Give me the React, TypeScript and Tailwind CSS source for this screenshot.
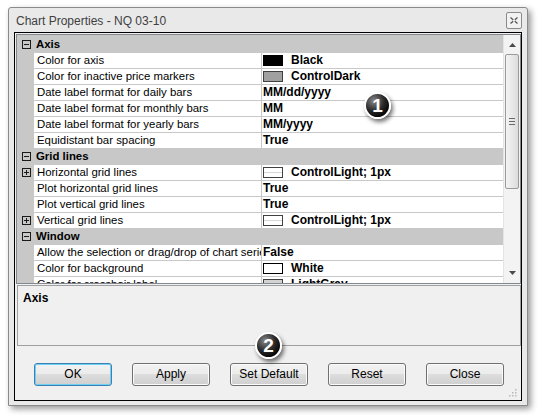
import React from 'react'

type Swatch = 'black' | 'dark' | 'light' | 'white' | 'lightgray'

type Row =
  | { kind: 'cat'; label: string }
  | { kind: 'prop'; label: string; value: string; swatch?: Swatch; expand?: boolean }

const rows: Row[] = [
  { kind: 'cat', label: 'Axis' },
  { kind: 'prop', label: 'Color for axis', value: 'Black', swatch: 'black' },
  { kind: 'prop', label: 'Color for inactive price markers', value: 'ControlDark', swatch: 'dark' },
  { kind: 'prop', label: 'Date label format for daily bars', value: 'MM/dd/yyyy' },
  { kind: 'prop', label: 'Date label format for monthly bars', value: 'MM' },
  { kind: 'prop', label: 'Date label format for yearly bars', value: 'MM/yyyy' },
  { kind: 'prop', label: 'Equidistant bar spacing', value: 'True' },
  { kind: 'cat', label: 'Grid lines' },
  { kind: 'prop', label: 'Horizontal grid lines', value: 'ControlLight; 1px', swatch: 'light', expand: true },
  { kind: 'prop', label: 'Plot horizontal grid lines', value: 'True' },
  { kind: 'prop', label: 'Plot vertical grid lines', value: 'True' },
  { kind: 'prop', label: 'Vertical grid lines', value: 'ControlLight; 1px', swatch: 'light', expand: true },
  { kind: 'cat', label: 'Window' },
  { kind: 'prop', label: 'Allow the selection or drag/drop of chart series', value: 'False' },
  { kind: 'prop', label: 'Color for background', value: 'White', swatch: 'white' },
  { kind: 'prop', label: 'Color for crosshair label', value: 'LightGray', swatch: 'lightgray' },
]

const swatchClass: Record<Swatch, string> = {
  black: 'bg-black border-black',
  dark: 'bg-[#a0a0a0] border-[#404040]',
  light: 'bg-white border-[#404040]',
  white: 'bg-white border-black',
  lightgray: 'bg-[#d3d3d3] border-[#404040]',
}

function Expander({ open }: { open: boolean }) {
  return (
    <svg width="9" height="9" viewBox="0 0 9 9" className="shrink-0">
      <rect x="0.5" y="0.5" width="8" height="8" fill="none" stroke="#1a1a1a" />
      <line x1="2" y1="4.5" x2="7" y2="4.5" stroke="#1a1a1a" />
      {!open && <line x1="4.5" y1="2" x2="4.5" y2="7" stroke="#1a1a1a" />}
    </svg>
  )
}

function Badge({ n }: { n: string }) {
  return (
    <div className="w-[27px] h-[27px] rounded-full border-2 border-white bg-[radial-gradient(circle_at_35%_30%,#8a8a8a_0%,#2a2a2a_45%,#000_80%)] shadow-[2px_3px_4px_rgba(0,0,0,0.55)] flex items-center justify-center text-white font-bold text-[19px] leading-none font-['Liberation_Sans',sans-serif]">
      {n}
    </div>
  )
}

function GridRow({ row }: { row: Row }) {
  if (row.kind === 'cat') {
    return (
      <div className="h-[15px] flex items-center shrink-0">
        <div className="w-[16px] flex justify-center pl-[2px]">
          <Expander open />
        </div>
        <span className="pl-[3px] font-bold text-[11.4px]">{row.label}</span>
      </div>
    )
  }
  return (
    <div className="h-[15px] flex gap-x-[1px] shrink-0">
      <div className="w-[16px] flex items-center justify-center pl-[2px]">
        {row.expand && <Expander open={false} />}
      </div>
      <div className="w-[227px] bg-white pl-[3px] text-[11.4px] whitespace-nowrap overflow-hidden">{row.label}</div>
      <div className="flex-1 bg-white pl-[1px] flex items-center gap-[8px] font-bold whitespace-nowrap overflow-hidden">
        {row.swatch && (
          <span className={`relative w-[20px] h-[11px] border shrink-0 ${swatchClass[row.swatch]}`}>
            {row.swatch === 'light' && (
              <span className="absolute left-0 right-0 top-[4px] h-[1px] bg-[#d8d8d8]" />
            )}
          </span>
        )}
        <span>{row.value}</span>
      </div>
    </div>
  )
}

function Scrollbar() {
  return (
    <div className="w-[17px] bg-[#f3f3f3] border-l border-[#e4e4e4] flex flex-col items-center">
      <div className="h-[17px] flex items-center justify-center pt-[3px]">
        <svg width="7" height="4" viewBox="0 0 7 4">
          <path d="M3.5 0 L7 4 L0 4 Z" fill="#4a4a4a" />
        </svg>
      </div>
      <div className="mt-[2px] w-[14px] h-[135px] rounded-[2px] border border-[#9a9a9a] bg-[linear-gradient(90deg,#f4f4f4,#dcdcdc)] flex flex-col items-center justify-center gap-[2px]">
        <span className="w-[6px] h-[1px] bg-[#6a6a6a]" />
        <span className="w-[6px] h-[1px] bg-[#6a6a6a]" />
        <span className="w-[6px] h-[1px] bg-[#6a6a6a]" />
      </div>
      <div className="flex-1" />
      <div className="h-[17px] flex items-center justify-center pb-[4px]">
        <svg width="7" height="4" viewBox="0 0 7 4">
          <path d="M0 0 L7 0 L3.5 4 Z" fill="#4a4a4a" />
        </svg>
      </div>
    </div>
  )
}

function Button({ label, focused }: { label: string; focused?: boolean }) {
  return (
    <button
      className={`w-[78px] h-[23px] rounded-[3px] border text-[12px] text-black bg-[linear-gradient(#f2f2f2_0%,#ebebeb_50%,#dddddd_50%,#cfcfcf_100%)] ${
        focused
          ? 'border-[#3c7fb1] shadow-[inset_0_0_0_1px_#6fd0f5]'
          : 'border-[#707070] shadow-[inset_0_0_0_1px_#fbfbfb]'
      }`}
    >
      {label}
    </button>
  )
}

export default function App() {
  return (
    <div className="relative w-[539px] h-[415px] bg-white pl-[8px] pt-[7px] font-['Liberation_Sans',Arial,sans-serif] text-[12px] leading-[15px] text-black">
      {/* Window */}
      <div className="w-[520px] border border-[#8a8a8a] rounded-t-[3px] bg-[#e9e9e9] px-[5px] pb-[4px] shadow-[3px_3px_6px_rgba(0,0,0,0.4)]">
        {/* Title bar */}
        <div className="h-[24px] flex items-center">
          <span className="pl-[2px] pt-[2px] text-[12px] text-[#404040]">Chart Properties - NQ 03-10</span>
          <div className="ml-auto w-[16px] h-[17px] border border-[#8a8a8a] rounded-[2px] bg-[#f2f2f2] flex items-center justify-center">
            <svg width="8" height="7" viewBox="0 0 8 7">
              <path d="M0.5 0.5 L7.5 6.5 M7.5 0.5 L0.5 6.5" stroke="#555" strokeWidth="1.3" />
              <rect x="3" y="2.5" width="2" height="2" fill="#f2f2f2" />
            </svg>
          </div>
        </div>

        {/* Client area */}
        <div className="relative h-[369px] border border-black bg-[#f0f0f0] flex flex-col pt-[1px] pl-[1px]">
          {/* Property grid */}
          <div className="w-[505px] h-[250px] border border-[#828790] flex bg-[#c8c8c8] overflow-hidden">
            <div className="w-[486px] pt-[2px] flex flex-col gap-y-[1px]">
              {rows.map((r, i) => (
                <GridRow key={i} row={r} />
              ))}
            </div>
            <Scrollbar />
          </div>

          {/* Description */}
          <div className="mt-[1px] ml-[1px] w-[504px] h-[61px] border border-[#a0a0a0] pl-[5px] pt-[5px]">
            <span className="font-bold">Axis</span>
          </div>

          {/* Buttons */}
          <div className="mt-[17px] pl-[18px] flex gap-[20px]">
            <Button label="OK" focused />
            <Button label="Apply" />
            <Button label="Set Default" />
            <Button label="Reset" />
            <Button label="Close" />
          </div>

          {/* Resize grip */}
          <svg className="absolute right-[4px] bottom-[3px]" width="9" height="9" viewBox="0 0 9 9">
            <g fill="#b8b8b8">
              <rect x="7" y="1" width="1.5" height="1.5" />
              <rect x="4" y="4" width="1.5" height="1.5" />
              <rect x="7" y="4" width="1.5" height="1.5" />
              <rect x="1" y="7" width="1.5" height="1.5" />
              <rect x="4" y="7" width="1.5" height="1.5" />
              <rect x="7" y="7" width="1.5" height="1.5" />
            </g>
          </svg>
        </div>
      </div>

      {/* Callout badges */}
      <div className="absolute left-[364px] top-[92px]">
        <Badge n="1" />
      </div>
      <div className="absolute left-[255px] top-[332px]">
        <Badge n="2" />
      </div>
    </div>
  )
}
